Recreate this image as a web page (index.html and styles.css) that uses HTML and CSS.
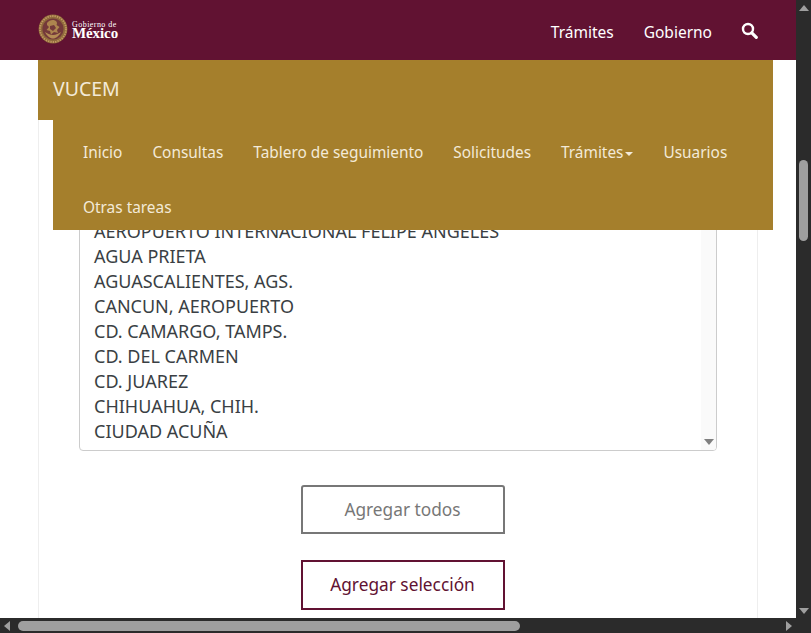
FILE: index.html
```html
<!DOCTYPE html>
<html lang="es">
<head>
<meta charset="utf-8">
<title>VUCEM</title>
<link rel="stylesheet" href="styles.css">
</head>
<body>
<div class="window">
  <div class="viewport">
    <header class="topbar">
      <a class="logo" href="#">
        <svg class="emblem" width="30" height="30" viewBox="0 0 30 30">
          <circle cx="15" cy="15" r="14.4" fill="#8f6a3c"/>
          <circle cx="15" cy="15" r="13" fill="none" stroke="#c39a62" stroke-width="1.8" stroke-dasharray="1.4 1"/>
          <circle cx="15" cy="15" r="10.6" fill="#74393a"/>
          <path d="M7 18c2 4 5 6.500 8 6.500s6-2.500 8-6.500c-2 1.500-5 3-8 3s-6-1.500-8-3z" fill="#b58c55"/>
          <path d="M9 9c2-2.500 5-3.500 8-2.500 2 .7 2.500 3 1.500 4.500l3 2-2.500 3 1 3-4-1-3 2.500-1-3.500-3.500-1 2.500-3-2-2z" fill="#ad844e"/>
          <path d="M12 12l4-1 2 3-3 3-3-2z" fill="#74393a"/>
        </svg>
        <span class="logo-text">
          <span class="logo-small">Gobierno de</span>
          <span class="logo-big">México</span>
        </span>
      </a>
      <nav class="topnav">
        <a href="#">Trámites</a>
        <a href="#">Gobierno</a>
        <svg class="search" width="17" height="17" viewBox="0 0 17 17">
          <circle cx="7" cy="7" r="5" fill="none" stroke="#fff" stroke-width="2.4"/>
          <path d="M10.800 10.800L15.300 15.300" stroke="#fff" stroke-width="3.200" stroke-linecap="round"/>
        </svg>
      </nav>
    </header>

    <div class="subnav">
      <div class="brand">VUCEM</div>
      <ul class="menu">
        <li>Inicio</li>
        <li>Consultas</li>
        <li>Tablero de seguimiento</li>
        <li>Solicitudes</li>
        <li>Trámites<span class="caret"></span></li>
        <li>Usuarios</li>
        <li>Otras tareas</li>
      </ul>
    </div>

    <main class="card">
      <div class="listbox">
        <ul class="options">
          <li>AEROPUERTO INTERNACIONAL FELIPE ANGELES</li>
          <li>AGUA PRIETA</li>
          <li>AGUASCALIENTES, AGS.</li>
          <li>CANCUN, AEROPUERTO</li>
          <li>CD. CAMARGO, TAMPS.</li>
          <li>CD. DEL CARMEN</li>
          <li>CD. JUAREZ</li>
          <li>CHIHUAHUA, CHIH.</li>
          <li>CIUDAD ACUÑA</li>
        </ul>
        <div class="list-scroll"><span class="arrow-down gray"></span></div>
      </div>
      <div class="actions">
        <button class="btn btn-gray">Agregar todos</button>
        <button class="btn btn-maroon">Agregar selección</button>
      </div>
    </main>
  </div>

  <div class="vbar">
    <span class="arrow-up"></span>
    <span class="vthumb"></span>
    <span class="arrow-down"></span>
  </div>
  <div class="hbar">
    <span class="arrow-left"></span>
    <span class="hthumb"></span>
    <span class="arrow-right"></span>
  </div>
  <div class="corner"></div>
</div>
</body>
</html>
```

FILE: styles.css
```css
* { box-sizing: border-box; }
html, body { margin: 0; height: 100%; overflow: hidden; }
body { font-family: "Noto Sans", sans-serif; font-size: 15.5px; background: #fff; }
ul { list-style: none; margin: 0; padding: 0; }
a { color: inherit; text-decoration: none; }

.window {
  display: grid;
  grid-template-columns: 796px 15px;
  grid-template-rows: 618px 15px;
  width: 811px;
  height: 633px;
}

.viewport { position: relative; overflow: hidden; background: #fff; }

.topbar {
  height: 60px;
  background: #611232;
  display: flex;
  align-items: center;
  justify-content: space-between;
  padding: 0 38px 0 38px;
  color: #fff;
}
.logo { display: flex; align-items: center; gap: 4px; margin-top: -2px; }
.emblem { display: block; }
.logo-text { display: flex; flex-direction: column; padding-top: 2px; font-family: "Liberation Serif", serif; color: #fff; }
.logo-small { font-size: 8px; line-height: 9px; letter-spacing: 0.45px; }
.logo-big { font-size: 15px; line-height: 13px; margin-top: -2px; font-weight: 700; letter-spacing: -0.1px; }

.topnav { display: flex; align-items: center; gap: 30px; margin-top: 4px; }
.search { margin-top: -4px; margin-left: -1px; }

.subnav {
  position: absolute;
  left: 38px;
  top: 60px;
  width: 735px;
  color: #f3ead8;
  z-index: 2;
}
.brand {
  width: 100%;
  height: 60px;
  background: #a57f2c;
  padding: 0 15px;
  font-size: 19.5px;
  line-height: 58px;
}
.menu {
  margin-left: 15px;
  height: 110px;
  background: #a57f2c;
  display: flex;
  flex-wrap: wrap;
  align-content: flex-start;
  column-gap: 30px;
  padding: 5px 15px 0 30px;
  font-size: 15.4px;
}
.menu li { height: 55px; line-height: 55px; }
.caret {
  display: inline-block;
  margin-left: 2px;
  vertical-align: 2px;
  border-top: 4px solid currentColor;
  border-left: 4px solid transparent;
  border-right: 4px solid transparent;
}

.card {
  height: 558px;
  margin: 0 38px;
  border-left: 1px solid #eee;
  border-right: 1px solid #eee;
  padding: 158px 40px 0;
}
.listbox {
  position: relative;
  height: 233px;
  width: 638px;
  border: 1px solid #ccc;
  border-radius: 4px;
  overflow: hidden;
}
.options { padding-left: 14px; color: #3a3f44; font-size: 18px; }
.options li { height: 25px; line-height: 25px; white-space: nowrap; }
.list-scroll {
  position: absolute;
  right: 0;
  top: 0;
  bottom: 0;
  width: 15px;
  background: #fafafa;
  display: flex;
  justify-content: center;
  align-items: flex-end;
  padding-bottom: 5px;
}

.actions {
  display: flex;
  flex-direction: column;
  align-items: center;
  gap: 26px;
  margin-top: 34px;
  padding-left: 9px;
}
.btn {
  width: 204px;
  height: 50px;
  background: #fff;
  font: 400 17.3px "Noto Sans", sans-serif;
  padding: 0 0 2px;
}
.btn-gray { border: 2px solid #777; color: #777; border-radius: 3px 3px 0 0; height: 49px; padding-bottom: 0; }
.btn-maroon { border: 2px solid #611232; color: #611232; border-radius: 0; }

.vbar {
  background: #2b2b2b;
  display: flex;
  flex-direction: column;
  align-items: center;
  padding: 5px 0 4px;
}
.vthumb {
  width: 9px;
  height: 81px;
  margin-top: 149px;
  margin-bottom: auto;
  border-radius: 5px;
  background: #9f9f9f;
}
.hbar {
  background: #2b2b2b;
  display: flex;
  align-items: center;
  padding: 0 4px;
}
.hthumb {
  width: 502px;
  height: 10px;
  margin-left: 8px;
  margin-right: auto;
  border-radius: 5px;
  background: #9f9f9f;
}
.corner { background: #2b2b2b; }

.arrow-up, .arrow-down, .arrow-left, .arrow-right { display: block; width: 0; height: 0; }
.arrow-up { border-bottom: 6px solid #9f9f9f; border-left: 5px solid transparent; border-right: 5px solid transparent; }
.arrow-down { border-top: 6px solid #9f9f9f; border-left: 5px solid transparent; border-right: 5px solid transparent; }
.arrow-down.gray { border-top-color: #808080; }
.arrow-left { border-right: 6px solid #9f9f9f; border-top: 5px solid transparent; border-bottom: 5px solid transparent; }
.arrow-right { border-left: 6px solid #9f9f9f; border-top: 5px solid transparent; border-bottom: 5px solid transparent; }
```
